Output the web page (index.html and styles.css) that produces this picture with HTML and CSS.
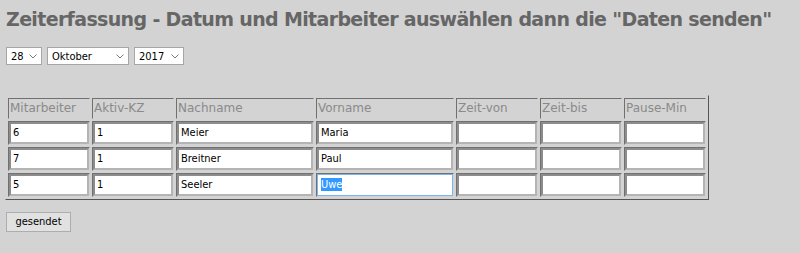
FILE: index.html
```html
<!DOCTYPE html>
<html lang="de">
<head>
<meta charset="utf-8">
<link rel="stylesheet" href="styles.css">
</head>
<body>
<h1 class="title">Zeiterfassung - Datum und Mitarbeiter auswählen dann die "Daten senden"</h1>
<div class="date-row">
  <div class="sel sel-day"><span>28</span><svg viewBox="0 0 8 5" class="chev"><path d="M0.5 0.5 L4 4 L7.5 0.5" fill="none" stroke="#7a7a7a" stroke-width="1"/></svg></div>
  <div class="sel sel-month"><span>Oktober</span><svg viewBox="0 0 8 5" class="chev"><path d="M0.5 0.5 L4 4 L7.5 0.5" fill="none" stroke="#7a7a7a" stroke-width="1"/></svg></div>
  <div class="sel sel-year"><span>2017</span><svg viewBox="0 0 8 5" class="chev"><path d="M0.5 0.5 L4 4 L7.5 0.5" fill="none" stroke="#7a7a7a" stroke-width="1"/></svg></div>
</div>
<table class="grid">
  <thead>
    <tr>
      <th>Mitarbeiter</th>
      <th>Aktiv-KZ</th>
      <th>Nachname</th>
      <th>Vorname</th>
      <th>Zeit-von</th>
      <th>Zeit-bis</th>
      <th>Pause-Min</th>
    </tr>
  </thead>
  <tbody>
    <tr>
      <td><div class="inp s">6</div></td>
      <td><div class="inp s">1</div></td>
      <td><div class="inp l">Meier</div></td>
      <td><div class="inp l">Maria</div></td>
      <td><div class="inp s"></div></td>
      <td><div class="inp s"></div></td>
      <td><div class="inp s"></div></td>
    </tr>
    <tr>
      <td><div class="inp s">7</div></td>
      <td><div class="inp s">1</div></td>
      <td><div class="inp l">Breitner</div></td>
      <td><div class="inp l">Paul</div></td>
      <td><div class="inp s"></div></td>
      <td><div class="inp s"></div></td>
      <td><div class="inp s"></div></td>
    </tr>
    <tr>
      <td><div class="inp s">5</div></td>
      <td><div class="inp s">1</div></td>
      <td><div class="inp l">Seeler</div></td>
      <td><div class="inp l focus"><span class="selected">Uwe</span></div></td>
      <td><div class="inp s"></div></td>
      <td><div class="inp s"></div></td>
      <td><div class="inp s"></div></td>
    </tr>
  </tbody>
</table>
<div class="btn">gesendet</div>
</body>
</html>
```

FILE: styles.css
```css
html, body {
  margin: 0;
  padding: 0;
  background: #d3d3d3;
}
body {
  padding: 0 6px;
  font-family: "DejaVu Sans", Verdana, sans-serif;
}
.title {
  margin: 0;
  padding-top: 7px;
  height: 47px;
  box-sizing: border-box;
  font-size: 19px;
  letter-spacing: -0.65px;
  font-weight: bold;
  color: #666666;
  line-height: 24px;
  white-space: nowrap;
}
.date-row {
  display: flex;
  gap: 5px;
  height: 18px;
}
.sel {
  box-sizing: border-box;
  height: 18px;
  background: #fff;
  border: 1px solid #a6a6a6;
  display: flex;
  align-items: center;
  justify-content: space-between;
  padding: 0 4px 0 4px;
  font-family: "DejaVu Sans Condensed", "DejaVu Sans", sans-serif;
  font-size: 11px;
  color: #000;
}
.sel-day { width: 36px; }
.sel-month { width: 82px; }
.sel-year { width: 50px; }
.chev { width: 8px; height: 5px; }
.grid {
  margin-top: 30px;
  border-collapse: separate;
  border-spacing: 2px;
  border: 1px solid;
  border-color: #d3d3d3 #555 #555 #d3d3d3;
  margin-left: -1px;
}
.grid th, .grid td {
  padding: 0;
  border: 1px solid;
  border-color: #707070 #d3d3d3 #d3d3d3 #707070;
}
.grid th {
  text-align: left;
  font-weight: normal;
  font-size: 12px;
  color: #8a8a8a;
  height: 19px;
  line-height: 19px;
  padding: 0 0 0 1px;
}
.grid td {
  padding: 0;
}
.inp {
  box-sizing: border-box;
  height: 22px;
  background: #fff;
  border: 2px solid;
  border-color: #8c8c8c #b4b4b4 #b4b4b4 #8c8c8c;
  font-family: "DejaVu Sans Condensed", "DejaVu Sans", sans-serif;
  font-size: 11px;
  line-height: 18px;
  padding-left: 2px;
  color: #000;
}
.inp.s { width: 80px; }
.inp.l { width: 136px; }
.inp.focus {
  border: 1px solid #7eb4ea;
  padding-left: 3px;
  line-height: 20px;
}
.selected {
  background: #3399ff;
  color: #fff;
}
.btn {
  margin-top: 12px;
  display: inline-block;
  box-sizing: border-box;
  width: 65px;
  height: 20px;
  line-height: 18px;
  text-align: center;
  background: #e1e1e1;
  border: 1px solid #adadad;
  font-family: "DejaVu Sans Condensed", "DejaVu Sans", sans-serif;
  font-size: 11px;
  color: #000;
}
```
